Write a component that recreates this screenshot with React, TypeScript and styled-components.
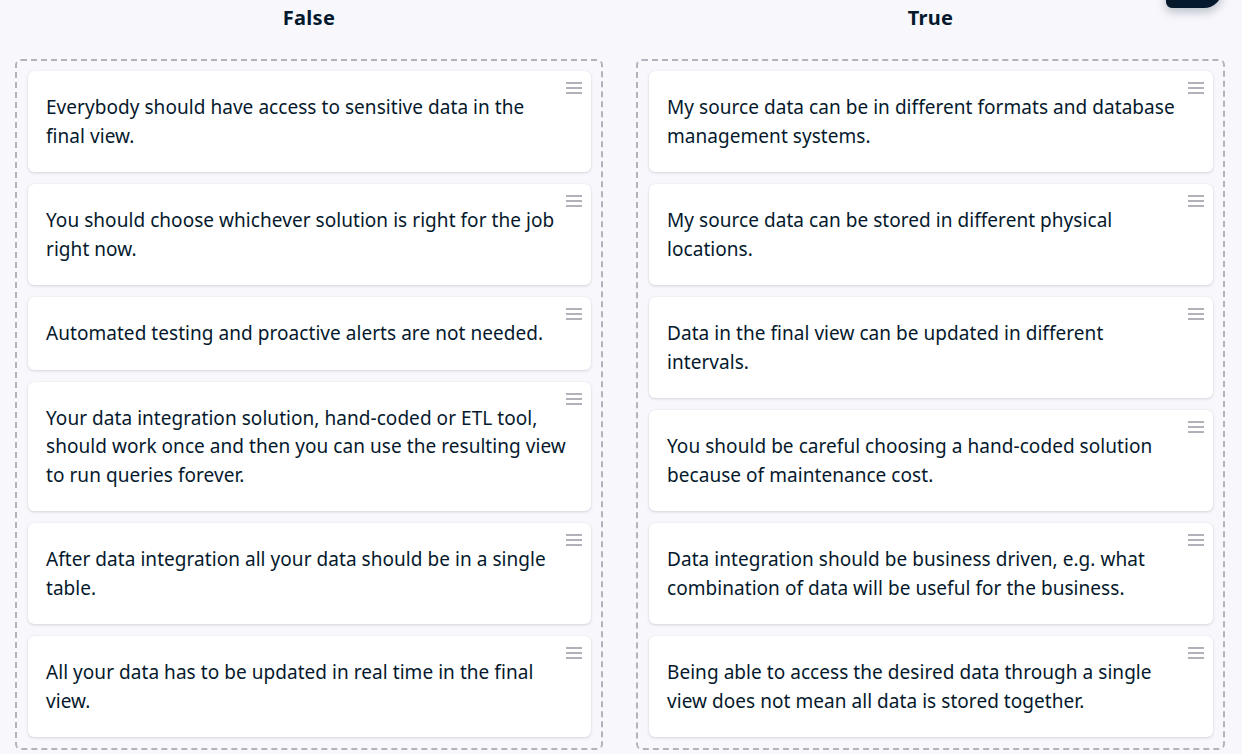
import React from "react";
import styled, { createGlobalStyle } from "styled-components";

const GlobalStyle = createGlobalStyle`
  html, body {
    margin: 0;
    padding: 0;
    background: #f7f7fc;
  }
  body {
    font-family: "Noto Sans", "DejaVu Sans", sans-serif;
    color: #05192d;
  }
`;

const Page = styled.div`
  position: relative;
  display: grid;
  grid-template-columns: 588px 589px;
  column-gap: 33px;
  padding: 0 17px 0 15px;
  width: 1242px;
  height: 754px;
  box-sizing: border-box;
  overflow: hidden;
`;

const Column = styled.section`
  display: flex;
  flex-direction: column;
`;

const Heading = styled.h2`
  margin: 0;
  height: 59px;
  padding-top: 6px;
  box-sizing: border-box;
  text-align: center;
  font-size: 20px;
  line-height: 24px;
  font-weight: 700;
  letter-spacing: 0.3px;
  color: #05192d;
`;

const DropZone = styled.div`
  display: flex;
  flex-direction: column;
  gap: 12px;
  padding: 10px 10px 11px 11px;
  border: 2px dashed #b3b3bd;
  border-radius: 6px;
  box-sizing: border-box;
`;

const Card = styled.div`
  position: relative;
  background: #ffffff;
  border-radius: 6px;
  box-shadow: 0 1px 3px rgba(5, 25, 45, 0.14), 0 0 1px rgba(5, 25, 45, 0.1);
  padding: 0 24px 0 18px;
`;

const CardText = styled.p`
  margin: 0;
  padding: 22px 0 22px;
  font-size: 19px;
  line-height: 28.5px;
  letter-spacing: 0.05px;
  color: #05192d;
`;

const Handle = styled.div`
  position: absolute;
  top: 11px;
  right: 9px;
  display: flex;
  flex-direction: column;
  gap: 3px;
  width: 16px;
`;

const HandleLine = styled.span`
  display: block;
  height: 2px;
  background: #b1b1b9;
`;

const CornerButton = styled.div`
  position: absolute;
  top: -20px;
  right: 20px;
  width: 56px;
  height: 28px;
  background: #05192d;
  border-radius: 4px 4px 18px 6px;
  box-shadow: 0 4px 10px rgba(5, 25, 45, 0.25);
`;

const falseItems = [
  "Everybody should have access to sensitive data in the final view.",
  "You should choose whichever solution is right for the job right now.",
  "Automated testing and proactive alerts are not needed.",
  "Your data integration solution, hand-coded or ETL tool, should work once and then you can use the resulting view to run queries forever.",
  "After data integration all your data should be in a single table.",
  "All your data has to be updated in real time in the final view.",
];

const trueItems = [
  "My source data can be in different formats and database management systems.",
  "My source data can be stored in different physical locations.",
  "Data in the final view can be updated in different intervals.",
  "You should be careful choosing a hand-coded solution because of maintenance cost.",
  "Data integration should be business driven, e.g. what combination of data will be useful for the business.",
  "Being able to access the desired data through a single view does not mean all data is stored together.",
];

const ItemCard = ({ text }: { text: string }) => (
  <Card>
    <CardText>{text}</CardText>
    <Handle>
      <HandleLine />
      <HandleLine />
      <HandleLine />
    </Handle>
  </Card>
);

export default function App() {
  return (
    <>
      <GlobalStyle />
      <Page>
        <Column>
          <Heading>False</Heading>
          <DropZone>
            {falseItems.map((t) => (
              <ItemCard key={t} text={t} />
            ))}
          </DropZone>
        </Column>
        <Column>
          <Heading>True</Heading>
          <DropZone>
            {trueItems.map((t) => (
              <ItemCard key={t} text={t} />
            ))}
          </DropZone>
        </Column>
        <CornerButton />
      </Page>
    </>
  );
}
